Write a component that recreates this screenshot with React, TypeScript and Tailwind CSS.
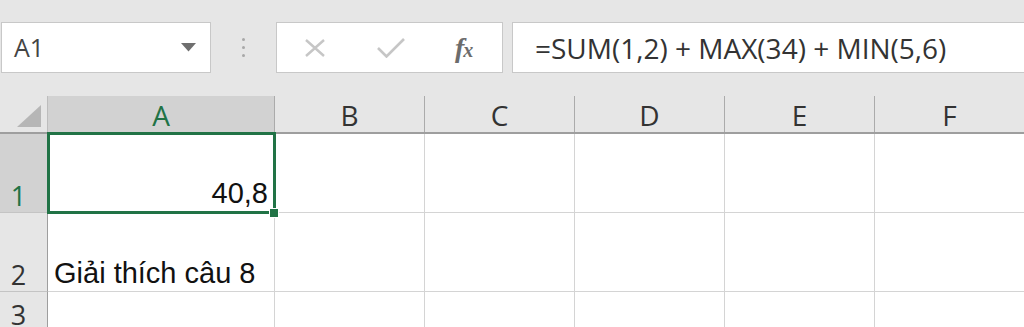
import React from "react"

const cols = ["B", "C", "D", "E", "F"]

const headFont = { fontFamily: '"Open Sans", "Noto Sans", sans-serif' }
const cellFont = { fontFamily: '"Liberation Sans", Arial, sans-serif' }

const NameBox = () => (
  <div className="ml-[1px] w-[210px] h-[51px] bg-white border border-[#c8c8c8] flex items-center justify-between pl-[12px] pr-[14px]">
    <span className="text-[25px] text-[#444] leading-none" style={headFont}>A1</span>
    <svg width="15" height="9" viewBox="0 0 15 9">
      <path d="M0 0 H15 L7.5 8.5 Z" fill="#6f6f6f" />
    </svg>
  </div>
)

const FormulaButtons = () => (
  <div className="w-[227px] h-[51px] bg-white border border-[#c8c8c8] flex items-center">
    <svg width="24" height="18" viewBox="0 0 24 18" className="ml-[26px]">
      <path d="M3 1 L21 17 M21 1 L3 17" stroke="#c6c6c6" strokeWidth="2.4" fill="none" />
    </svg>
    <svg width="28" height="20" viewBox="0 0 28 20" className="ml-[50px]">
      <path d="M1 10 L9.5 18.5 L27 1" stroke="#c6c6c6" strokeWidth="2.6" fill="none" />
    </svg>
    <span className="ml-[50px] italic font-bold text-[#6c6c6c] leading-none" style={{ fontFamily: '"Liberation Serif", "Times New Roman", serif' }}>
      <span className="text-[28px]">f</span>
      <span className="text-[20px] -ml-[1px]">x</span>
    </span>
  </div>
)

const Toolbar = () => (
  <div className="h-[96px] pt-[22px] flex items-start">
    <NameBox />
    <div className="w-[65px] h-[51px] flex flex-col items-center justify-center gap-[5px]">
      <span className="w-[3px] h-[3px] rounded-full bg-[#a8a8a8]" />
      <span className="w-[3px] h-[3px] rounded-full bg-[#a8a8a8]" />
      <span className="w-[3px] h-[3px] rounded-full bg-[#a8a8a8]" />
    </div>
    <FormulaButtons />
    <div className="ml-[9px] flex-1 h-[51px] bg-white border border-[#c8c8c8] border-r-0 flex items-center pl-[22px]">
      <span className="text-[28px] text-[#333] leading-none" style={headFont}>
        =SUM(1,2) + MAX(34) + MIN(5,6)
      </span>
    </div>
  </div>
)

const HeaderRow = () => (
  <div className="flex h-[38px] border-b-2 border-[#9e9e9e]">
    <div className="w-[48px] shrink-0 border-r border-[#bdbdbd] flex items-end justify-end pr-[6px] pb-[5px]">
      <svg width="24" height="22" viewBox="0 0 24 22">
        <path d="M24 0 V22 H0 Z" fill="#b6b6b6" />
      </svg>
    </div>
    <div className="w-[227px] shrink-0 bg-[#d2d2d2] border-r border-[#ababab] flex items-end justify-center pb-[3px]">
      <span className="text-[28px] text-[#217346] leading-none" style={headFont}>A</span>
    </div>
    {cols.map((c) => (
      <div key={c} className="w-[150px] shrink-0 border-r border-[#ababab] flex items-end justify-center pb-[3px]">
        <span className="text-[28px] text-[#333] leading-none" style={headFont}>{c}</span>
      </div>
    ))}
  </div>
)

const BodyRow = ({ n, h, selected, children }: { n: number; h: string; selected?: boolean; children?: React.ReactNode }) => (
  <div className={`flex ${h}`}>
    <div
      className={`w-[48px] shrink-0 border-r border-b border-r-[#9e9e9e] border-b-[#c4c4c4] flex items-end justify-center pr-[10px] pb-[3px] ${
        selected ? "bg-[#d2d2d2] text-[#217346]" : "bg-[#e6e6e6] text-[#333]"
      }`}
    >
      <span className="text-[27px] leading-none" style={headFont}>{n}</span>
    </div>
    {children}
    {cols.map((c) => (
      <div key={c} className="w-[150px] shrink-0 bg-white border-r border-b border-[#d4d4d4]" />
    ))}
  </div>
)

export default function App() {
  return (
    <div className="w-[1024px] h-[327px] overflow-hidden bg-[#e6e6e6]">
      <Toolbar />
      <div className="flex flex-col">
        <HeaderRow />
        <BodyRow n={1} h="h-[79px]" selected>
          <div className="relative w-[227px] shrink-0 bg-white border-r border-b border-[#d4d4d4] flex items-end justify-end pr-[6px] pb-[4px]">
            <span className="text-[29px] text-[#111] leading-none" style={cellFont}>40,8</span>
            <div className="absolute -left-[1px] -top-[2px] w-[229px] h-[82px] border-[3px] border-[#217346]" />
            <div className="absolute left-[221px] top-[74px] w-[10px] h-[10px] bg-[#217346] border border-white" />
          </div>
        </BodyRow>
        <BodyRow n={2} h="h-[79px]">
          <div className="w-[227px] shrink-0 bg-white border-r border-b border-[#d4d4d4] flex items-end pl-[6px] pb-[3px]">
            <span className="text-[29px] text-[#111] leading-none" style={cellFont}>Giải thích câu 8</span>
          </div>
        </BodyRow>
        <BodyRow n={3} h="h-[40px]">
          <div className="w-[227px] shrink-0 bg-white border-r border-b border-[#d4d4d4]" />
        </BodyRow>
      </div>
    </div>
  )
}
